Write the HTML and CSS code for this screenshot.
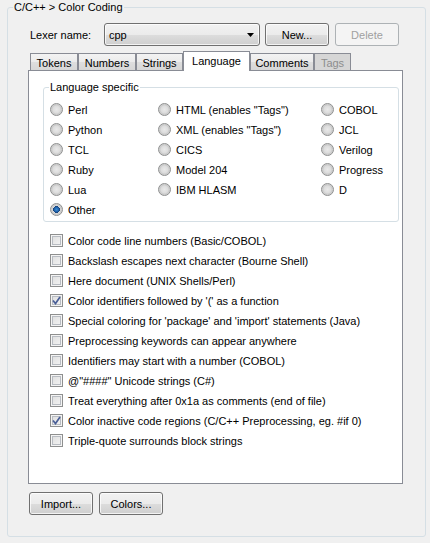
FILE: index.html
```html
<!DOCTYPE html>
<html>
<head>
<meta charset="utf-8">
<link rel="stylesheet" href="styles.css">
</head>
<body>
<div class="group outer">
  <span class="group-title">C/C++ &gt; Color Coding</span>
  <div class="lexer-row">
    <span class="lexer-label">Lexer name:</span>
    <div class="combo">
      <span class="combo-text">cpp</span>
      <svg class="combo-arrow" width="7" height="4" viewBox="0 0 7 4"><path d="M0 0H7L3.5 4Z" fill="#000"/></svg>
    </div>
    <button class="btn btn-new">New...</button>
    <button class="btn" disabled>Delete</button>
  </div>
  <div class="tabs">
    <div class="tab t-tokens">Tokens</div>
    <div class="tab t-numbers">Numbers</div>
    <div class="tab t-strings">Strings</div>
    <div class="tab t-language selected">Language</div>
    <div class="tab t-comments">Comments</div>
    <div class="tab t-tags disabled">Tags</div>
  </div>
  <div class="panel">
    <div class="group lang">
      <span class="group-title">Language specific</span>
      <div class="radio-cols">
        <div class="radio-col c1">
          <div class="opt"><span class="radio"></span><span>Perl</span></div>
          <div class="opt"><span class="radio"></span><span>Python</span></div>
          <div class="opt"><span class="radio"></span><span>TCL</span></div>
          <div class="opt"><span class="radio"></span><span>Ruby</span></div>
          <div class="opt"><span class="radio"></span><span>Lua</span></div>
          <div class="opt"><span class="radio on"></span><span>Other</span></div>
        </div>
        <div class="radio-col c2">
          <div class="opt"><span class="radio"></span><span>HTML (enables "Tags")</span></div>
          <div class="opt"><span class="radio"></span><span>XML (enables "Tags")</span></div>
          <div class="opt"><span class="radio"></span><span>CICS</span></div>
          <div class="opt"><span class="radio"></span><span>Model 204</span></div>
          <div class="opt"><span class="radio"></span><span>IBM HLASM</span></div>
        </div>
        <div class="radio-col c3">
          <div class="opt"><span class="radio"></span><span>COBOL</span></div>
          <div class="opt"><span class="radio"></span><span>JCL</span></div>
          <div class="opt"><span class="radio"></span><span>Verilog</span></div>
          <div class="opt"><span class="radio"></span><span>Progress</span></div>
          <div class="opt"><span class="radio"></span><span>D</span></div>
        </div>
      </div>
    </div>
    <div class="checks">
      <div class="opt"><span class="check"></span><span>Color code line numbers (Basic/COBOL)</span></div>
      <div class="opt"><span class="check"></span><span>Backslash escapes next character (Bourne Shell)</span></div>
      <div class="opt"><span class="check"></span><span>Here document (UNIX Shells/Perl)</span></div>
      <div class="opt"><span class="check on"><svg width="9" height="9" viewBox="0 0 9 9"><path d="M1 4.5L3.5 7.5L8 1" fill="none" stroke="#4a5f97" stroke-width="1.7"/></svg></span><span>Color identifiers followed by '(' as a function</span></div>
      <div class="opt"><span class="check"></span><span>Special coloring for 'package' and 'import' statements (Java)</span></div>
      <div class="opt"><span class="check"></span><span>Preprocessing keywords can appear anywhere</span></div>
      <div class="opt"><span class="check"></span><span>Identifiers may start with a number (COBOL)</span></div>
      <div class="opt"><span class="check"></span><span>@"####" Unicode strings (C#)</span></div>
      <div class="opt"><span class="check"></span><span>Treat everything after 0x1a as comments (end of file)</span></div>
      <div class="opt"><span class="check on"><svg width="9" height="9" viewBox="0 0 9 9"><path d="M1 4.5L3.5 7.5L8 1" fill="none" stroke="#4a5f97" stroke-width="1.7"/></svg></span><span>Color inactive code regions (C/C++ Preprocessing, eg. #if 0)</span></div>
      <div class="opt"><span class="check"></span><span>Triple-quote surrounds block strings</span></div>
    </div>
  </div>
  <div class="bottom-row">
    <button class="btn">Import...</button>
    <button class="btn">Colors...</button>
  </div>
</div>
</body>
</html>
```

FILE: styles.css
```css
* { box-sizing: border-box; }
html, body { margin: 0; padding: 0; }
body {
  background: #f0f0f0;
  font-family: "Liberation Sans", Arial, sans-serif;
  font-size: 11px;
  color: #000;
  width: 430px;
  height: 543px;
  overflow: hidden;
}
.group {
  position: relative;
  border: 1px solid #d5dfe5;
  border-radius: 3px;
}
.group-title {
  position: absolute;
  top: -7px;
  left: 5px;
  padding: 0 1px;
  line-height: 13px;
  background: #f0f0f0;
  white-space: nowrap;
}
.outer {
  margin: 7px 0 0 7px;
  width: 419px;
  height: 530px;
}
.lexer-row {
  display: flex;
  align-items: center;
  margin-top: 15px;
  padding-left: 22px;
  height: 23px;
}
.lexer-label { width: 74px; }
.btn, .combo {
  height: 23px;
  border: 1px solid #707070;
  border-radius: 3px;
  background: linear-gradient(#f2f2f2 0%, #ebebeb 50%, #dddddd 50%, #cfcfcf 100%);
  box-shadow: inset 0 0 0 1px rgba(255,255,255,0.75);
  font: inherit;
  color: #000;
  padding: 0;
}
.btn { width: 64px; }
.btn:disabled {
  border-color: #adb2b5;
  background: #f4f4f4;
  box-shadow: none;
  color: #a0a0a0;
}
.combo {
  width: 156px;
  margin-right: 5px;
  display: flex;
  align-items: center;
  justify-content: space-between;
  padding: 0 5px 0 4px;
}
.btn-new { margin-right: 6px; }
.tabs {
  display: flex;
  align-items: flex-end;
  height: 19px;
  margin: 5px 0 0 22px;
}
.tab {
  height: 17px;
  border: 1px solid #898c95;
  border-bottom: none;
  background: linear-gradient(#f3f3f3, #ebebeb 50%, #dedede 50%, #d7d7d7);
  display: flex;
  align-items: center;
  justify-content: center;
  padding-top: 1px;
}
.tab.selected {
  position: relative;
  z-index: 1;
  height: 20px;
  margin-bottom: -1px;
  background: #fff;
  padding-top: 0;
  padding-bottom: 1px;
}
.tab.disabled {
  background: #d6d6d6;
  color: #8d8d8d;
}
.t-tokens { width: 48px; }
.t-numbers { width: 58px; }
.t-strings { width: 47px; }
.t-language { width: 67px; }
.t-comments { width: 64px; }
.t-tags { width: 37px; }
.panel {
  margin-left: 20px;
  width: 375px;
  height: 414px;
  border: 1px solid #898c95;
  background: #fff;
}
.lang {
  margin: 16px 0 0 14px;
  width: 356px;
  height: 135px;
  padding: 11px 0 0 6px;
}
.lang .group-title { background: #fff; }
.radio-cols { display: flex; }
.radio-col { display: flex; flex-direction: column; }
.c1 { width: 108px; }
.c2 { width: 163px; }
.opt {
  display: flex;
  align-items: center;
  height: 20px;
  padding-top: 1px;
  white-space: nowrap;
}
.radio {
  width: 13px;
  height: 13px;
  border-radius: 50%;
  border: 1px solid #8e8f8f;
  margin-right: 5px;
  flex: none;
  background: radial-gradient(circle at 50% 50%, #e9e9e9 0, #dcdcdc 45%, #c9c9c9 60%, #f3f3f3 100%);
}
.radio.on {
  background:
    radial-gradient(circle at 50% 50%, #3b8fd6 0, #1f5fa8 30%, #143f75 42%, transparent 46%),
    radial-gradient(circle at 50% 50%, #e9e9e9 0, #dcdcdc 45%, #c9c9c9 60%, #f3f3f3 100%);
}
.checks {
  margin: 8px 0 0 21px;
}
.check {
  width: 13px;
  height: 13px;
  border: 1px solid #8e8f8f;
  margin-right: 5px;
  flex: none;
  background: linear-gradient(135deg, #dcdcdc, #f6f6f6);
  box-shadow: inset 0 0 0 1px #f4f4f4, inset 0 0 0 2px #b8bcc2;
  display: flex;
  align-items: center;
  justify-content: center;
}
.bottom-row {
  display: flex;
  gap: 6px;
  margin: 8px 0 0 21px;
}
```
